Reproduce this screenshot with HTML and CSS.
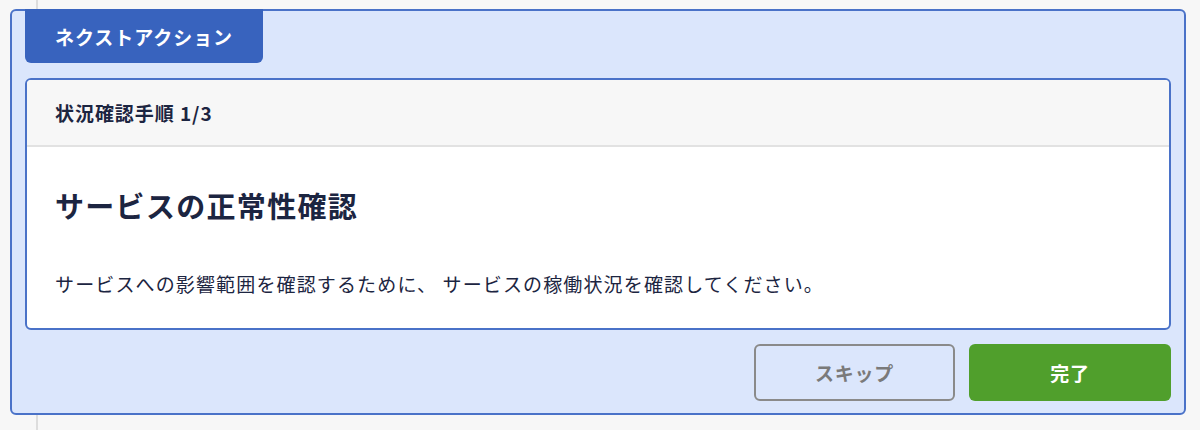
FILE: index.html
```html
<!DOCTYPE html>
<html lang="ja">
<head>
<meta charset="utf-8">
<title>ネクストアクション</title>
<link rel="stylesheet" href="styles.css">
</head>
<body>
<div class="timeline">
  <section class="panel">
    <div class="tab">ネクストアクション</div>
    <div class="card">
      <div class="card-header">状況確認手順 1/3</div>
      <div class="card-body">
        <h2 class="title">サービスの正常性確認</h2>
        <p class="desc">サービスへの影響範囲を確認するために、 サービスの稼働状況を確認してください。</p>
      </div>
    </div>
    <div class="actions">
      <button class="btn btn-skip">スキップ</button>
      <button class="btn btn-done">完了</button>
    </div>
  </section>
</div>
</body>
</html>
```

FILE: styles.css
```css
* { box-sizing: border-box; }

html, body {
  margin: 0;
  padding: 0;
  background: #f7f7f7;
  font-family: "Noto Sans CJK JP", "Noto Sans", sans-serif;
  color: #1c2541;
}

.timeline {
  position: relative;
  height: 430px;
  padding: 9px 14px 0 10px;
}

.timeline::before {
  content: "";
  position: absolute;
  left: 36px;
  top: 0;
  bottom: 0;
  width: 2px;
  background: #dddddd;
}

.panel {
  position: relative;
  width: 1176px;
  background: #dbe6fc;
  border: 2px solid #4a72c8;
  border-radius: 6px;
  padding: 0 13px 12px;
}

.tab {
  display: inline-flex;
  align-items: center;
  height: 54px;
  width: 238px;
  margin-top: -2px;
  padding-left: 30px;
  background: #3863be;
  color: #ffffff;
  font-size: 19px;
  font-weight: 700;
  letter-spacing: 0.05em;
  border-radius: 0 0 6px 6px;
}

.card {
  margin-top: 15px;
  background: #ffffff;
  border: 2px solid #4a72c8;
  border-radius: 6px;
  overflow: hidden;
}

.card-header {
  height: 67px;
  display: flex;
  align-items: center;
  padding: 0 28px;
  background: #f7f7f7;
  border-bottom: 2px solid #e2e2e2;
  font-size: 19px;
  font-weight: 700;
  letter-spacing: 0.05em;
}

.card-body {
  padding: 37px 28px 31px;
}

.title {
  margin: 0;
  font-size: 29px;
  line-height: 42px;
  font-weight: 700;
  letter-spacing: 0.045em;
}

.desc {
  margin: 44px 0 0;
  font-size: 19px;
  line-height: 27px;
  letter-spacing: 0.06em;
}

.actions {
  display: flex;
  justify-content: flex-end;
  gap: 14px;
  margin-top: 14px;
}

.btn {
  height: 57px;
  width: 202px;
  border-radius: 6px;
  font-family: "Noto Sans CJK JP", "Noto Sans", sans-serif;
  font-size: 19px;
  font-weight: 700;
  letter-spacing: 0.04em;
  cursor: pointer;
}

.btn-skip {
  width: 201px;
  background: transparent;
  border: 2px solid #8a8a8a;
  color: #7a7a7a;
}

.btn-done {
  background: #509f2c;
  border: none;
  color: #ffffff;
}
```
